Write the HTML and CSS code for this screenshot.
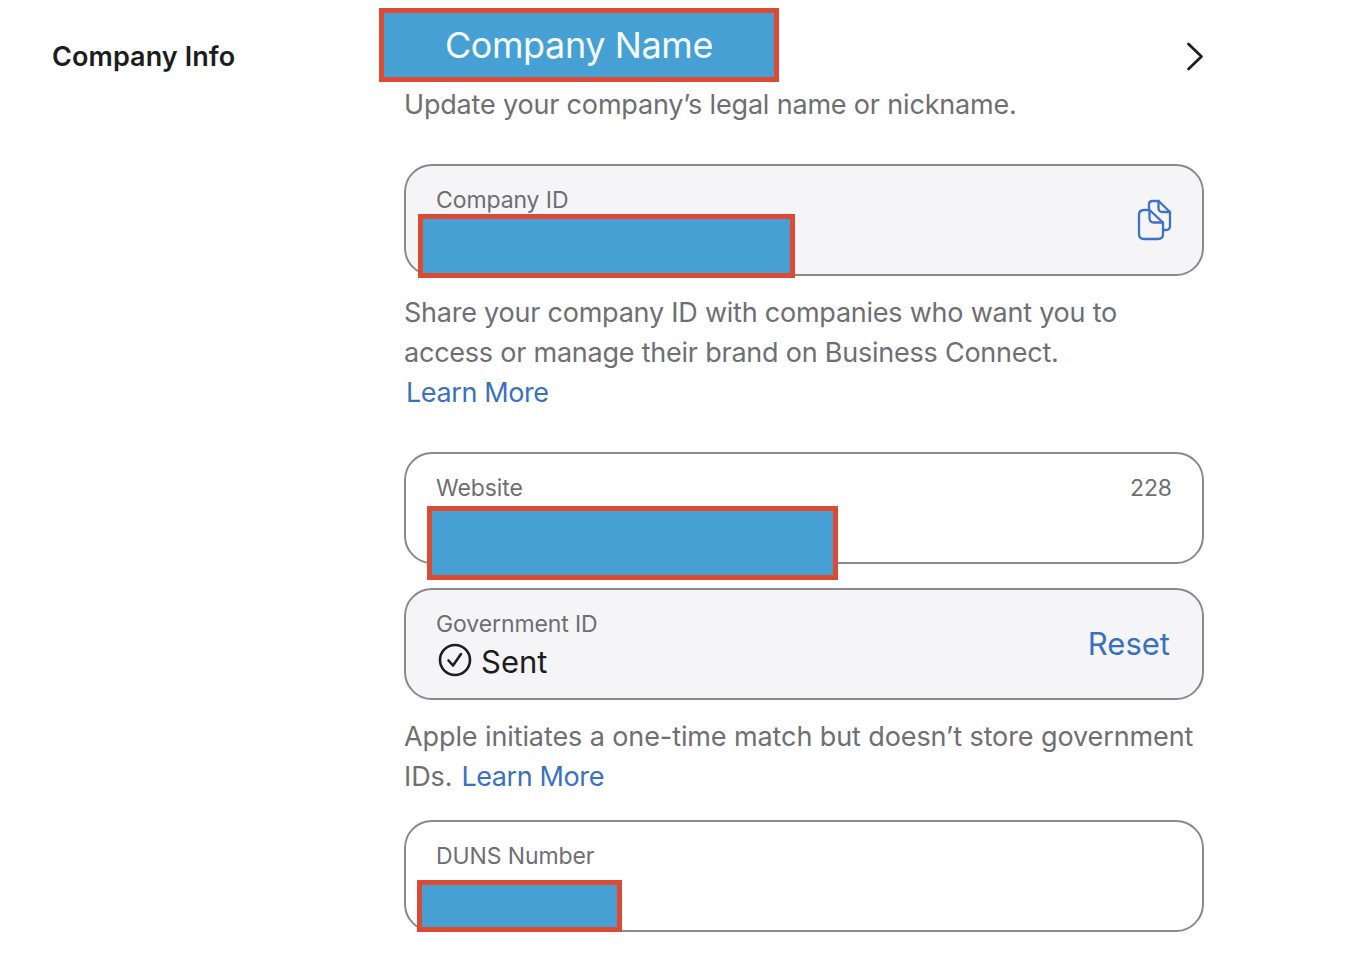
FILE: index.html
```html
<!DOCTYPE html>
<html lang="en">
<head>
<meta charset="utf-8">
<title>Company Info</title>
<link rel="stylesheet" href="styles.css">
</head>
<body>
<div class="page">
  <h2 class="side-title">Company Info</h2>
  <main class="content">
    <div class="title-row">
      <div class="redact redact-name">Company Name</div>
      <svg class="chevron" width="20" height="32" viewBox="0 0 20 32"><path d="M3.5 3 L16.5 15.5 L3.5 28" fill="none" stroke="#1d1d1f" stroke-width="2.7" stroke-linecap="round" stroke-linejoin="round"/></svg>
    </div>
    <p class="note note-first">Update your company’s legal name or nickname.</p>

    <section class="card card-grey card-id">
      <div class="label-row"><span class="label">Company ID</span></div>
      <div class="redact redact-id"></div>
      <svg class="copy-icon" width="36" height="42" viewBox="0 0 36 42" fill="none" stroke="#3d72c6" stroke-width="2.3" stroke-linejoin="round" stroke-linecap="round">
        <path d="M12 11 V5.5 Q12 2 15.5 2 H21.5 L33 13 V27 Q33 31 29 31 H26"/>
        <path d="M21.5 2 V9 Q21.5 13 25.5 13 H33"/>
        <path d="M2 16 Q2 11 7 11 H12.5 L26 23.5 V35 Q26 40 21 40 H7 Q2 40 2 35 Z"/>
        <path d="M12.5 11 V19 Q12.5 23.5 17 23.5 H26"/>
      </svg>
    </section>
    <p class="note">Share your company ID with companies who want you to access or manage their brand on Business Connect.<br><a class="link link-block" href="#">Learn More</a></p>

    <section class="card card-website">
      <div class="label-row"><span class="label">Website</span><span class="label">228</span></div>
      <div class="redact redact-website"></div>
    </section>

    <section class="card card-grey card-gov">
      <div class="label-row"><span class="label">Government ID</span></div>
      <div class="status">
        <svg width="34" height="34" viewBox="0 0 34 34" fill="none" stroke="#1d1d1f" stroke-width="2.6" stroke-linecap="round" stroke-linejoin="round"><circle cx="17" cy="17" r="15"/><path d="M10.5 17.5 L15 22.5 L23 11"/></svg>
        <span>Sent</span>
      </div>
      <a class="link reset" href="#">Reset</a>
    </section>
    <div class="note note-gov">
      <span class="note-line">Apple initiates a one-time match but doesn’t store government</span>
      <span class="note-line"><span>IDs.</span><a class="link link-inline" href="#">Learn More</a></span>
    </div>

    <section class="card card-duns">
      <div class="label-row"><span class="label">DUNS Number</span></div>
      <div class="redact redact-duns"></div>
    </section>
  </main>
</div>
</body>
</html>
```
FILE: styles.css
```css
* { box-sizing: border-box; }
html, body { margin: 0; padding: 0; background: #fff; }
body { font-family: Inter, "Liberation Sans", sans-serif; color: #1d1d1f; height: 966px; overflow: hidden; }
.page { display: grid; grid-template-columns: 404px 800px; }
.side-title { margin: 0; padding: 39px 0 0 52px; font-size: 27px; line-height: 36px; font-weight: 600; letter-spacing: 0.08px; }
.content { display: flex; flex-direction: column; }
.title-row { position: relative; height: 84px; display: flex; justify-content: flex-end; align-items: flex-start; padding-top: 41px; }
.chevron { display: block; margin-right: -1px; }
.note { margin: 16px 0 0; font-size: 27px; line-height: 40px; color: #6e6e73; letter-spacing: -0.23px; position: relative; top: 1px; }
.note-first { margin: 0 0 40px; letter-spacing: -0.18px; }
.note-gov { letter-spacing: -0.1px; }
.note-line { display: flex; gap: 9px; white-space: nowrap; }
.card { position: relative; height: 112px; border: 2px solid #8a8a8c; border-radius: 28px; padding: 20px 30px 0; background: #fff; }
.card-grey { background: #f5f5f7; }
.card-website { margin-top: 40px; }
.card-gov { margin-top: 24px; }
.card-duns { margin-top: 24px; }
.label-row { display: flex; justify-content: space-between; }
.label { font-size: 23px; line-height: 28px; color: #6e6e73; letter-spacing: -0.1px; }
.link { color: #3a70c2; text-decoration: none; letter-spacing: -0.4px; }
.link-block { margin-left: 2px; }
.status { display: flex; align-items: center; gap: 9px; margin-top: 3px; margin-left: 2px; font-size: 31px; line-height: 42px; color: #1d1d1f; }
.status svg { display: block; margin-bottom: 4px; }
.reset { position: absolute; right: 32px; top: 34px; font-size: 31px; line-height: 40px; letter-spacing: 0; }
.copy-icon { position: absolute; right: 29px; top: 33px; }
.redact { position: absolute; background: #47a0d3; border: 5px solid #dc4a33; }
.redact-name { left: -25px; top: 8px; width: 400px; height: 74px; display: flex; align-items: center; justify-content: center; color: #f4fcff; font-size: 36px; letter-spacing: -0.4px; }
.redact-id { left: 12px; top: 48px; width: 377px; height: 64px; }
.redact-website { left: 21px; top: 52px; width: 411px; height: 74px; }
.redact-duns { left: 11px; top: 58px; width: 205px; height: 52px; }
```
